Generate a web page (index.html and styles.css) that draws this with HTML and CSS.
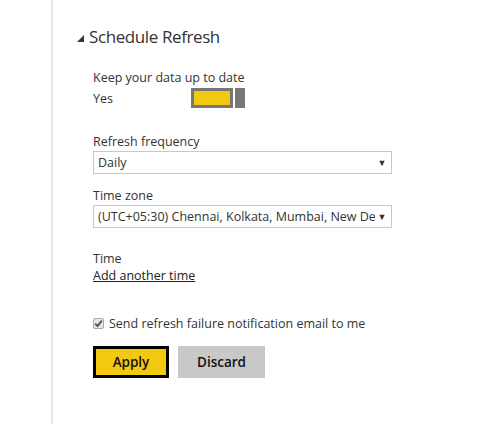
FILE: index.html
```html
<!DOCTYPE html>
<html>
<head>
<meta charset="utf-8">
<link rel="stylesheet" href="styles.css">
</head>
<body>
<div class="page">
  <div class="rule"></div>
  <div class="panel">
    <h2 class="title"><span class="caret"></span>Schedule Refresh</h2>
    <div class="section">
      <div class="label">Keep your data up to date</div>
      <div class="toggle-row">
        <span class="yes">Yes</span>
        <span class="toggle"><span class="track"></span><span class="thumb"></span></span>
      </div>
    </div>
    <div class="field">
      <div class="label">Refresh frequency</div>
      <div class="select"><span class="val">Daily</span><span class="arrow">&#9660;</span></div>
    </div>
    <div class="field">
      <div class="label">Time zone</div>
      <div class="select"><span class="val">(UTC+05:30) Chennai, Kolkata, Mumbai, New De</span><span class="arrow">&#9660;</span></div>
    </div>
    <div class="time">
      <div class="label">Time</div>
      <a class="link">Add another time</a>
    </div>
    <label class="check"><span class="box"><svg width="9" height="9" viewBox="0 0 9 9"><path d="M1.2 4.6 L3.6 7 L7.8 1.6" fill="none" stroke="#555" stroke-width="2"/></svg></span>Send refresh failure notification email to me</label>
    <div class="buttons">
      <button class="btn apply">Apply</button>
      <button class="btn discard">Discard</button>
    </div>
  </div>
</div>
</body>
</html>
```
FILE: styles.css
```css
html, body { margin: 0; padding: 0; background: #fff; }
body { font-family: "Open Sans", "Noto Sans", sans-serif; color: #333; }
.page { display: flex; height: 424px; }
.rule { width: 2px; background: #e6e6e6; margin-left: 51px; }
.panel { padding-left: 20px; display: flex; flex-direction: column; }
.title { margin: 25px 0 0 0; font-size: 17px; font-weight: 400; color: #333; display: flex; align-items: center; line-height: 24px; letter-spacing: -0.4px; }
.caret { width: 0; height: 0; border-style: solid; border-width: 0 0 7px 7px; border-color: transparent transparent #333 transparent; margin: 3px 5px 0 4px; }
.section { margin: 20px 0 0 20px; }
.label { font-size: 12.5px; line-height: 17px; color: #333; }
.toggle-row { display: flex; align-items: center; margin-top: 2px; height: 20px; }
.yes { font-size: 12.5px; width: 98px; }
.toggle { display: flex; height: 20px; }
.track { width: 36px; height: 14px; border: 3px solid #777; background: #f2c811; }
.thumb { width: 10px; height: 20px; background: #777; margin-left: 2px; }
.field { margin: 25px 0 0 20px; }
.field + .field { margin-top: 13px; }
.select { width: 297px; height: 21px; border: 1px solid #c8c8c8; display: flex; align-items: center; font-size: 12.5px; margin-top: 1px; }
.select .val { flex: 1; overflow: hidden; white-space: nowrap; padding-left: 4px; }
.select .arrow { font-size: 9px; width: 14px; color: #333; padding-right: 2px; text-align: center; }
.time { margin: 22px 0 0 20px; }
.link { display: block; font-size: 12.5px; color: #222; text-decoration: underline; line-height: 17px; }
.check { margin: 31px 0 0 20px; font-size: 12.5px; display: flex; align-items: center; }
.box { width: 9px; height: 9px; border: 1px solid #aaa; border-radius: 2px; background: #e6e6e6; margin-right: 5px; display: flex; align-items: center; justify-content: center; }
.buttons { margin: 14px 0 0 20px; display: flex; gap: 9px; }
.btn { font-family: "Open Sans", sans-serif; font-size: 13.5px; font-weight: 600; height: 32px; border: none; padding: 0; color: #111; }
.apply { width: 76px; background: #f2c811; border: 3px solid #000; }
.discard { width: 87px; background: #c8c8c8; }
```
